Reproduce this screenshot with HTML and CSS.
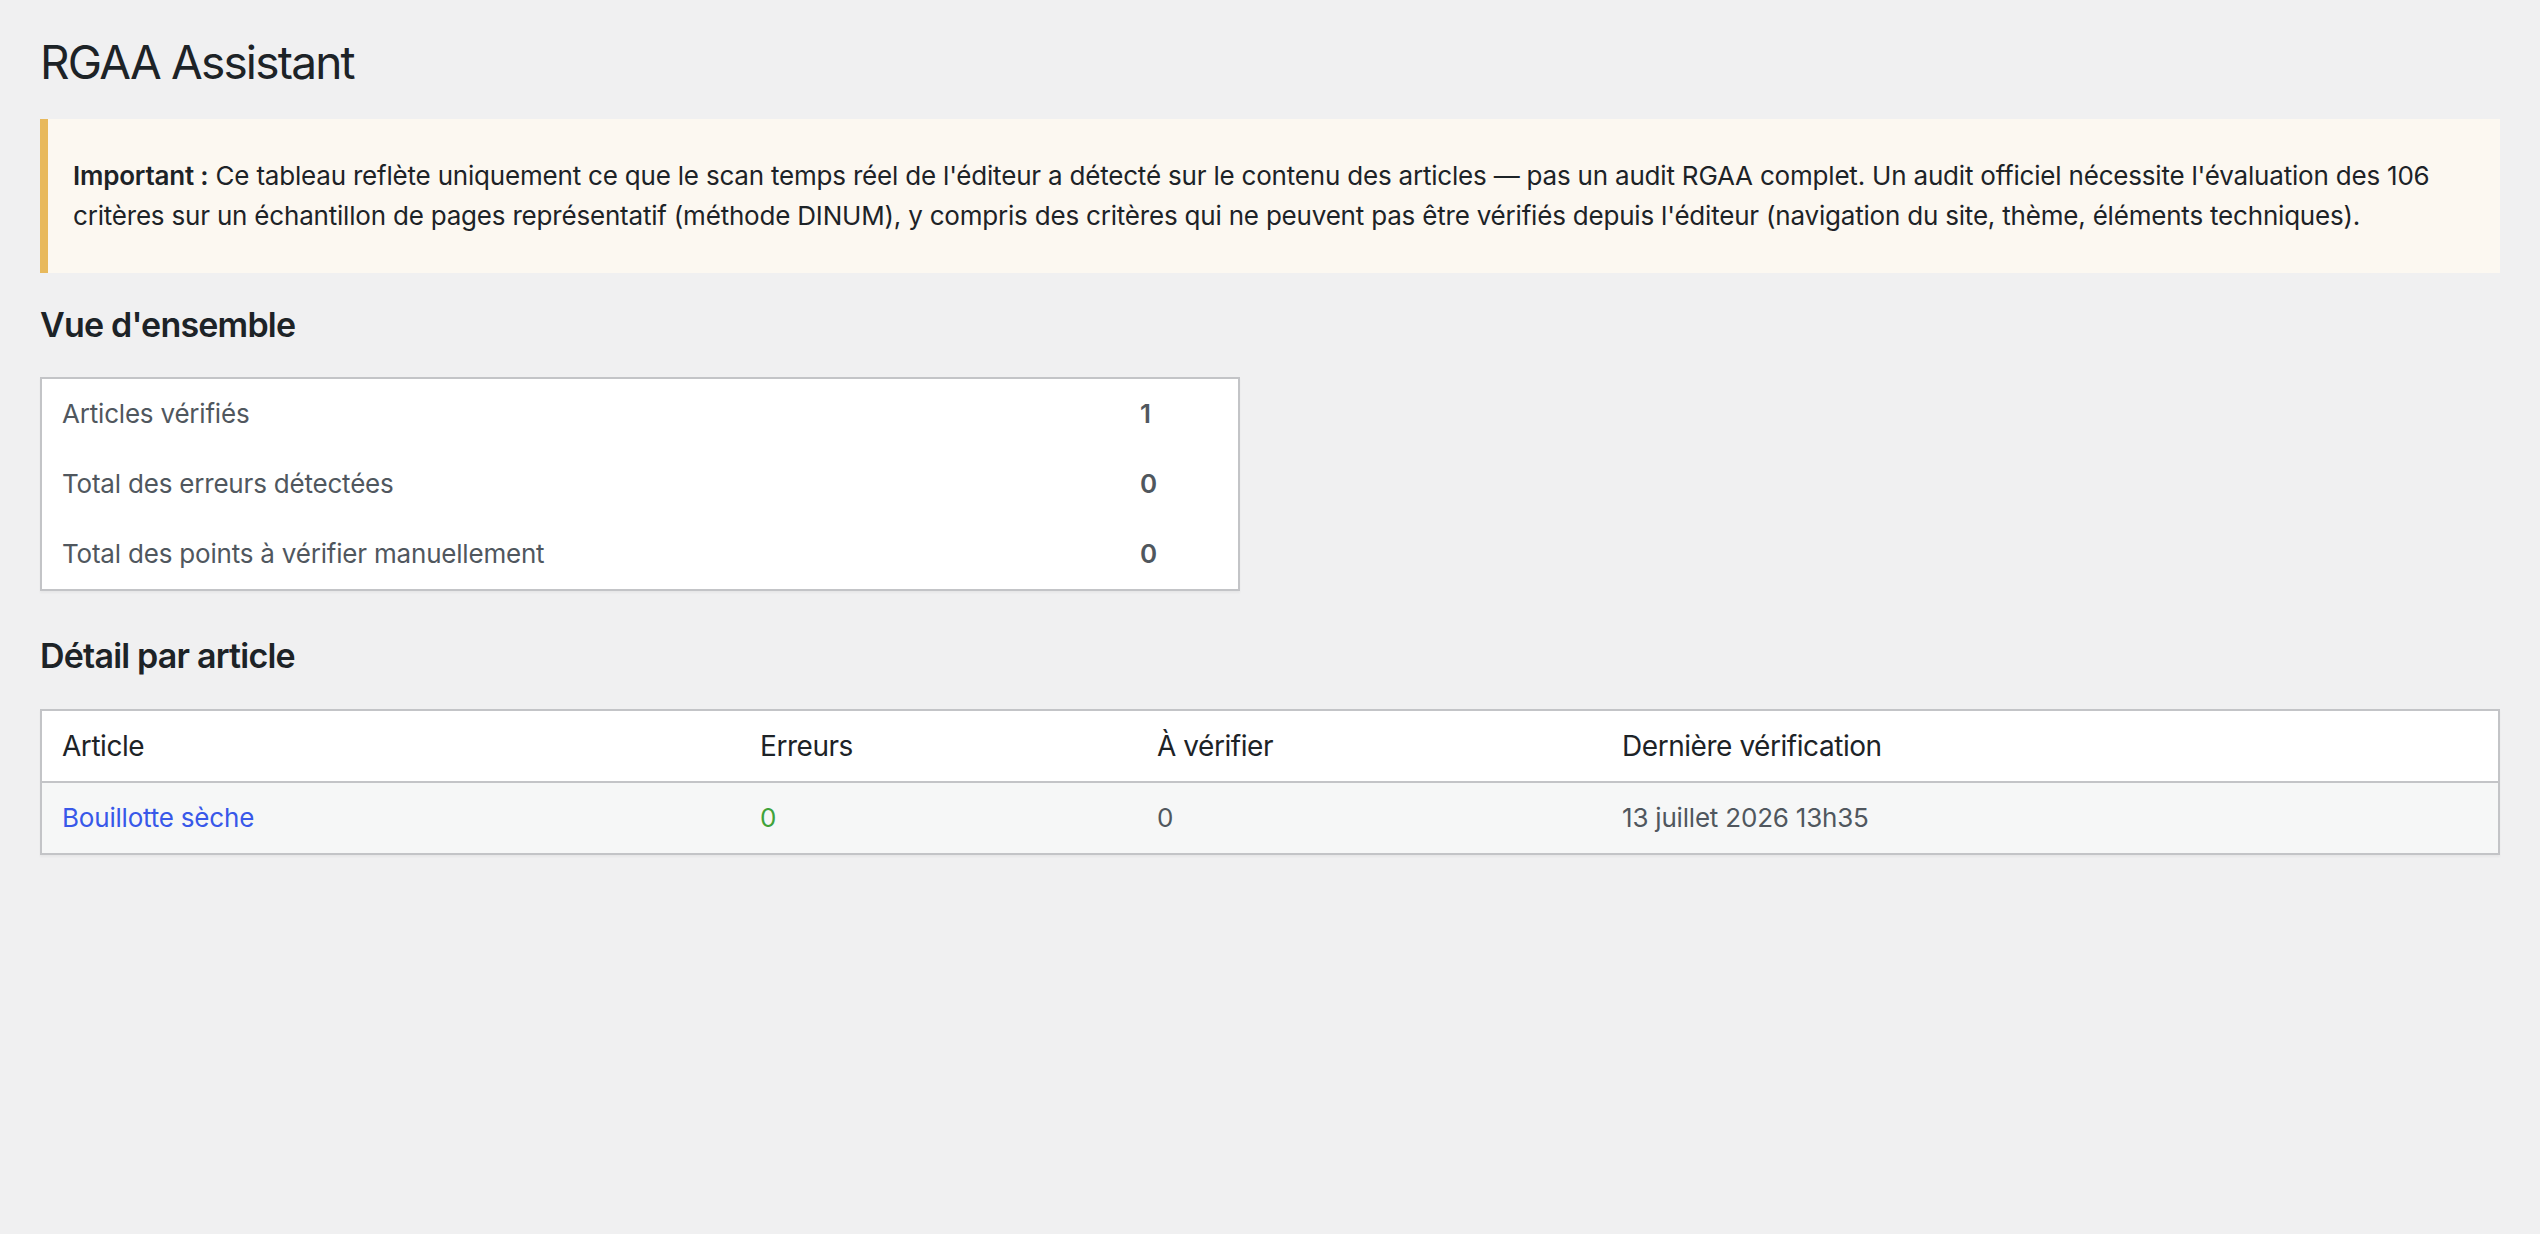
FILE: index.html
```html
<!DOCTYPE html>
<html lang="fr">
<head>
    <meta charset="utf-8">
    <title>RGAA Assistant</title>
    <link rel="stylesheet" href="styles.css">
</head>
<body>
    <div class="wrap">
        <h1 class="page-title">RGAA Assistant</h1>

        <div class="notice notice-warning">
            <p><strong>Important :</strong> Ce tableau reflète uniquement ce que le scan temps réel de l'éditeur a détecté sur le contenu des articles — pas un audit RGAA complet. Un audit officiel nécessite l'évaluation des 106 critères sur un échantillon de pages représentatif (méthode DINUM), y compris des critères qui ne peuvent pas être vérifiés depuis l'éditeur (navigation du site, thème, éléments techniques).</p>
        </div>

        <h2 class="section-title">Vue d'ensemble</h2>
        <table class="widefat summary-table">
            <tbody>
                <tr>
                    <td>Articles vérifiés</td>
                    <td class="value">1</td>
                </tr>
                <tr>
                    <td>Total des erreurs détectées</td>
                    <td class="value">0</td>
                </tr>
                <tr>
                    <td>Total des points à vérifier manuellement</td>
                    <td class="value">0</td>
                </tr>
            </tbody>
        </table>

        <h2 class="section-title section-title-detail">Détail par article</h2>
        <table class="widefat detail-table">
            <thead>
                <tr>
                    <th class="col-article">Article</th>
                    <th class="col-errors">Erreurs</th>
                    <th class="col-check">À vérifier</th>
                    <th class="col-date">Dernière vérification</th>
                </tr>
            </thead>
            <tbody>
                <tr class="alternate">
                    <td><a href="#">Bouillotte sèche</a></td>
                    <td class="count-ok">0</td>
                    <td>0</td>
                    <td>13 juillet 2026 13h35</td>
                </tr>
            </tbody>
        </table>
    </div>
</body>
</html>
```

FILE: styles.css
```css
:root {
    --background-color: #f0f0f1;
    --text-color: #1d2327;
    --muted-color: #50575e;
    --border-color: #c3c4c7;
    --link-color: #3858e9;
    --ok-color: #3fa33a;
    --warning-border: #e8b95c;
    --warning-background: #fcf8f1;
    --stripe-color: #f6f7f7;
}

body {
    font-family: Inter, "Noto Sans", "Liberation Sans", sans-serif;
    background-color: var(--background-color);
    color: var(--text-color);
    font-size: 26px;
    line-height: 40px;
    letter-spacing: -0.2px;
    margin: 0;
}

.wrap {
    padding: 32px 40px;
}

.page-title {
    font-size: 46px;
    font-weight: 400;
    line-height: 60px;
    letter-spacing: -1.8px;
    margin: 0;
}

.notice {
    margin-top: 27px;
    padding: 37px 24px 37px 25px;
    border-left: 8px solid var(--warning-border);
    background: var(--warning-background);
}

.notice p {
    margin: 0;
}

.notice strong {
    font-weight: 600;
}

.section-title {
    font-size: 34px;
    font-weight: 600;
    line-height: 44px;
    letter-spacing: -0.8px;
    margin: 30px 0;
}

.section-title-detail {
    margin-top: 43px;
    margin-bottom: 31px;
}

.widefat {
    border: 2px solid var(--border-color);
    border-spacing: 0;
    background: #fff;
    box-shadow: 0 2px 2px rgba(0, 0, 0, 0.04);
}

.widefat td,
.widefat th {
    padding: 16px 20px;
    line-height: 38px;
    text-align: left;
    vertical-align: top;
}

.widefat td {
    color: var(--muted-color);
    font-size: 26px;
}

.widefat th {
    color: var(--text-color);
    font-size: 28px;
    font-weight: 400;
    letter-spacing: -0.45px;
}

.widefat thead th {
    border-bottom: 2px solid var(--border-color);
}

.summary-table {
    width: 1200px;
}

.summary-table .value {
    width: 78px;
    font-weight: 600;
}

.detail-table {
    width: 100%;
}

.col-article {
    width: 658px;
}

.col-errors {
    width: 357px;
}

.col-check {
    width: 425px;
}

.alternate {
    background: var(--stripe-color);
}

.widefat a {
    color: var(--link-color);
    text-decoration: none;
}

.count-ok {
    color: var(--ok-color) !important;
}
```
